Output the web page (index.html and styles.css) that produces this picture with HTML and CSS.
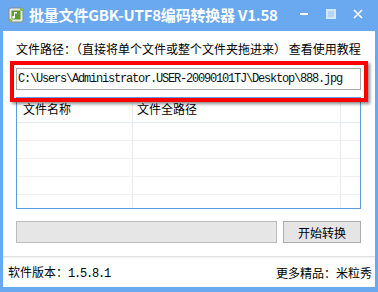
FILE: index.html
```html
<!doctype html>
<html>
<head>
<meta charset="utf-8">
<title>批量文件GBK-UTF8编码转换器</title>
<link rel="stylesheet" href="styles.css">
</head>
<body>
<div class="window">
  <div class="titlebar">
    <svg class="app-icon" width="16" height="16" viewBox="0 0 16 16">
      <rect x="1" y="1" width="14" height="14" rx="2" fill="#e9ece6" stroke="#8a8f86"/>
      <rect x="3.5" y="3.5" width="9" height="9" fill="#5f9a2c"/>
      <path d="M7 5v5.2a1.4 1.4 0 1 1-1-1.3V5h3v1.4H7z" fill="#fff"/>
      <path d="M12 1.5l2.5 2.5M1.5 12l2.5 2.5" stroke="#6cc01c" stroke-width="1.6"/>
    </svg>
    <span class="title">批量文件GBK-UTF8编码转换器 V1.58</span>
    <div class="controls">
      <span class="min"></span>
      <span class="max"></span>
      <svg class="close" width="10" height="10" viewBox="0 0 10 10">
        <path d="M1 1l8 8M9 1l-8 8" stroke="#fff" stroke-width="1.6"/>
      </svg>
    </div>
  </div>
  <div class="client">
    <div class="main">
      <div class="label">文件路径：（直接将单个文件或整个文件夹拖进来） 查看使用教程</div>
      <div class="path-box">C:\Users\Administrator.USER-20090101TJ\Desktop\888.jpg</div>
      <div class="list">
        <div class="row head">
          <div class="c1">文件名称</div><div class="c2">文件全路径</div><div class="c3"></div>
        </div>
        <div class="row"><div class="c1"></div><div class="c2"></div><div class="c3"></div></div>
        <div class="row"><div class="c1"></div><div class="c2"></div><div class="c3"></div></div>
        <div class="row"><div class="c1"></div><div class="c2"></div><div class="c3"></div></div>
        <div class="row"><div class="c1"></div><div class="c2"></div><div class="c3"></div></div>
        <div class="row"><div class="c1"></div><div class="c2"></div><div class="c3"></div></div>
      </div>
      <div class="actions">
        <div class="progress"></div>
        <button class="start">开始转换</button>
      </div>
      <div class="highlight"></div>
    </div>
    <div class="status">
      <span>软件版本：<span class="num">1.5.8.1</span></span>
      <span>更多精品：米粒秀</span>
    </div>
  </div>
</div>
</body>
</html>
```

FILE: styles.css
```css
body {
	margin: 0;
	font-family: "Noto Sans CJK SC", "Liberation Sans", sans-serif;
	font-size: 12px;
	color: #000;
}
.window {
	width: 378px;
	height: 292px;
	background: #6aa8ef;
	box-sizing: border-box;
	padding: 0 3px 5px 3px;
	display: flex;
	flex-direction: column;
}
.titlebar {
	height: 31px;
	display: flex;
	align-items: center;
	color: #fff;
	position: relative;
}
.app-icon {
	margin-left: 5px;
	margin-top: -2px;
}
.title {
	margin-left: 5px;
	margin-top: -2px;
	font-size: 15px;
	font-weight: bold;
	letter-spacing: -0.2px;
}
.controls {
	position: absolute;
	right: 0;
	top: 0;
	height: 31px;
}
.min {
	position: absolute;
	left: -75px;
	top: 13px;
	width: 8px;
	height: 2px;
	background: #fff;
}
.max {
	position: absolute;
	left: -49px;
	top: 9px;
	width: 6px;
	height: 6px;
	border: 2px solid #d6e7fb;
	background: #b6d4f7;
}
.close {
	position: absolute;
	left: -22px;
	top: 9px;
}
.client {
	flex: 1;
	background: #fff;
	display: flex;
	flex-direction: column;
}
.main {
	position: relative;
	flex: 1;
	padding: 10px 14px 0 13px;
	display: flex;
	flex-direction: column;
}
.label {
	line-height: 16px;
	height: 16px;
	white-space: nowrap;
}
.path-box {
	margin-top: 11px;
	height: 22px;
	box-sizing: border-box;
	border: 1px solid #a9a9a9;
	font-family: "Liberation Mono", monospace;
	font-size: 12px;
	letter-spacing: -1.2px;
	line-height: 20px;
	padding-left: 1px;
	white-space: nowrap;
	color: #111;
}
.list {
	margin-top: 7px;
	height: 112px;
	box-sizing: border-box;
	border: 1px solid #5d9be3;
	overflow: hidden;
}
.row {
	display: flex;
	height: 17px;
	border-bottom: 1px solid #eef0f3;
}
.row.head {
	height: 24px;
	line-height: 22px;
	border-bottom: 1px solid #e4ebf3;
}
.c1 {
	width: 116px;
	padding-left: 6px;
	box-sizing: border-box;
	border-right: 1px solid #e8ecf0;
}
.c2 {
	width: 208px;
	padding-left: 4px;
	box-sizing: border-box;
	border-right: 1px solid #e8ecf0;
}
.c3 {
	flex: 1;
}
.actions {
	margin-top: 12px;
	display: flex;
	gap: 6px;
	height: 22px;
}
.progress {
	width: 261px;
	box-sizing: border-box;
	border: 1px solid #bcbcbc;
	background: #e6e6e6;
}
.start {
	flex: 1;
	margin: 0;
	box-sizing: border-box;
	border: 1px solid #adadad;
	background: #e5e5e5;
	font-family: "Noto Sans CJK SC", sans-serif;
	font-size: 12px;
	padding: 0;
}
.highlight {
	position: absolute;
	left: 7px;
	top: 30px;
	width: 358px;
	height: 41px;
	box-sizing: border-box;
	border: 4px solid #f00;
	box-shadow: 2px 2px 3px rgba(0, 0, 0, 0.45);
}
.status {
	height: 30px;
	border-top: 1px solid #e2e2e2;
	box-shadow: inset 0 1px 2px #eeeeee;
	display: flex;
	justify-content: space-between;
	align-items: center;
	padding: 0 3px 0 5px;
}
.num {
	font-family: "Liberation Mono", monospace;
	font-size: 12px;
	letter-spacing: -1.2px;
}
```
